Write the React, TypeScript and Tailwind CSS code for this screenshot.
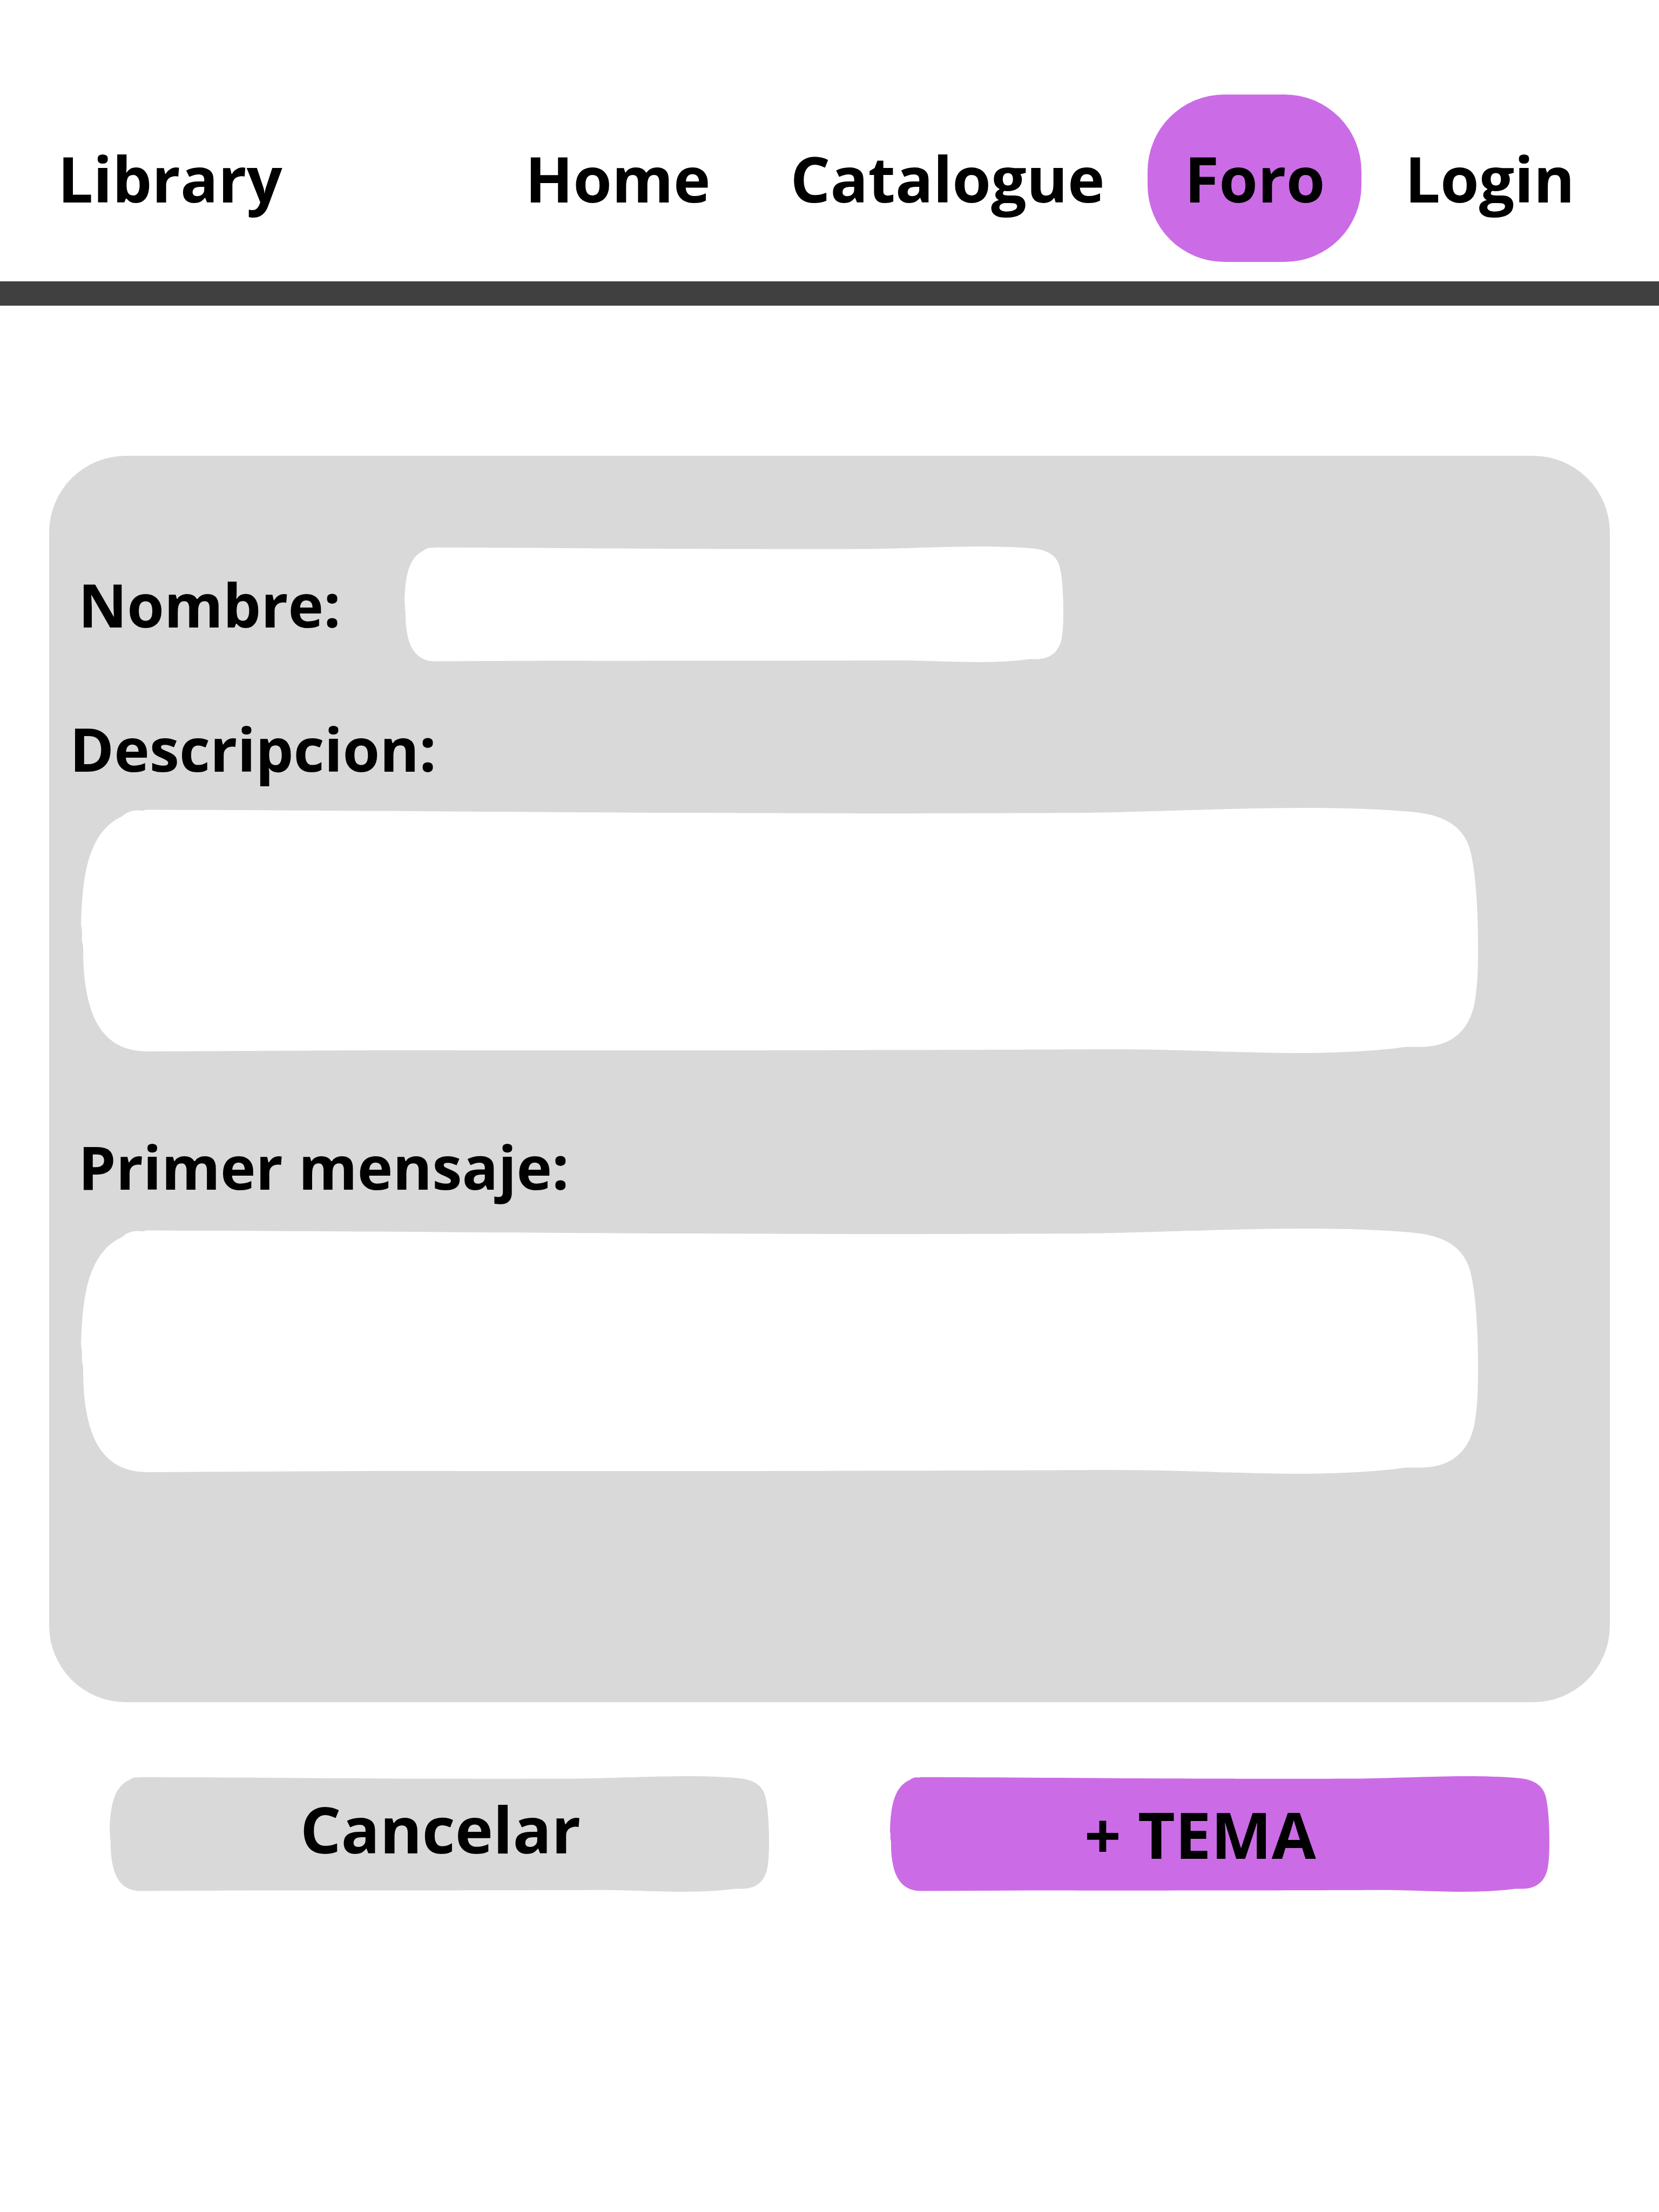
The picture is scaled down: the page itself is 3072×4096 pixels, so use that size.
import { useState } from "react";
import type { ReactNode } from "react";

const BLOB_PATH =
  "M0 242C1 200 4 160 11 128C21 81 42 37 85 18C96 8 110 3 129 6L135 4C630 5 1000 10 1500 11C1750 12 1900 11 2070 10.5C2250 8 2390 0 2561 0C2640 0 2730 4 2780 9C2850 17 2888 46 2897 104C2906 148 2910 220 2910 286C2910 330 2909 365 2904 397C2896 455 2862 497 2790 497L2759 497C2700 506 2610 510 2532 510C2420 510 2300 502 2150 502C1900 504 1000 505 631 504L136 506.5C50 506 22 440 12 384C6 355 4.5 325 4.5 289L2 275V256Z";

/* Hand-drawn rounded shape that stretches behind its content. */
function Blob({ className, fill, children }: { className: string; fill: string; children: ReactNode }) {
  return (
    <div className={`relative ${className}`}>
      <svg
        aria-hidden="true"
        viewBox="0 0 2910 510"
        preserveAspectRatio="none"
        className={`absolute inset-0 h-full w-full ${fill}`}
      >
        <path d={BLOB_PATH} />
      </svg>
      {children}
    </div>
  );
}

const links = ["Home", "Catalogue", "Foro", "Login"];

export default function App() {
  const [active, setActive] = useState("Foro");

  return (
    <div className="min-h-screen bg-white font-['Open_Sans',sans-serif] font-bold text-black">
      <header className="flex items-center justify-between border-b-[45px] border-[#404040] pt-[175px] pr-[88px] pb-[36px] pl-[107px] text-[116px] leading-[158px]">
        <a href="#library">Library</a>
        <nav className="flex items-center gap-3">
          {links.map((name) => (
            <a
              key={name}
              href={`#${name.toLowerCase()}`}
              onClick={() => setActive(name)}
              aria-current={name === active ? "page" : undefined}
              className={`rounded-[142px] px-[68px] py-[76px] ${name === active ? "bg-[#cb6ce6]" : ""}`}
            >
              {name}
            </a>
          ))}
        </nav>
      </header>

      <form onSubmit={(e) => e.preventDefault()}>
        <section className="mx-[91px] mt-[278px] rounded-[142px] bg-[#d9d9d9] pt-[168px] pb-[423px] text-[111px] leading-[152px]">
          <div className="flex items-center gap-[118px] pl-[54px]">
            <label htmlFor="nombre">Nombre:</label>
            <Blob className="h-[214px] max-w-[1220px] flex-1" fill="fill-white">
              <input
                id="nombre"
                type="text"
                className="relative h-full w-full bg-transparent px-16 outline-none"
              />
            </Blob>
          </div>

          <label htmlFor="descripcion" className="mt-[84px] block pl-[38px]">
            Descripcion:
          </label>
          <Blob className="mt-[34px] mr-[244px] ml-[59px] h-[454px]" fill="fill-white">
            <textarea
              id="descripcion"
              className="relative block h-full w-full resize-none bg-transparent px-24 py-12 outline-none"
            />
          </Blob>

          <label htmlFor="mensaje" className="mt-[134px] block pl-[54px]">
            Primer mensaje:
          </label>
          <Blob className="mt-[39px] mr-[244px] ml-[59px] h-[454px]" fill="fill-white">
            <textarea
              id="mensaje"
              className="relative block h-full w-full resize-none bg-transparent px-24 py-12 outline-none"
            />
          </Blob>
        </section>

        <div className="mt-[137px] flex gap-[224px] px-[203px] text-[119px] leading-[162px]">
          <Blob className="h-[214px] flex-1" fill="fill-[#d9d9d9]">
            <button type="reset" className="relative h-full w-full cursor-pointer pb-5 pl-1">
              Cancelar
            </button>
          </Blob>
          <Blob className="h-[214px] flex-1" fill="fill-[#cb6ce6]">
            <button type="submit" className="relative h-full w-full cursor-pointer pr-[72px]">
              + TEMA
            </button>
          </Blob>
        </div>
      </form>
    </div>
  );
}
